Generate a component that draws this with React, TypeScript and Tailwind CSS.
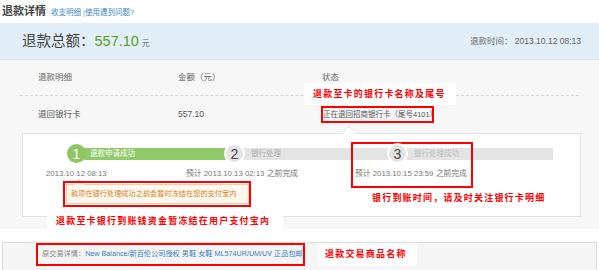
import type { ReactNode } from "react";

function StepCircle({ n, done }: { n: number; done?: boolean }) {
  return (
    <div
      className={
        done
          ? "relative z-10 w-[19px] h-[19px] rounded-full bg-[#8dc663] text-white flex items-center justify-center text-[14px] leading-none"
          : "relative z-10 w-[21px] h-[21px] rounded-full bg-[#e4e4e4] border-2 border-white text-[#444] flex items-center justify-center text-[14px] leading-none"
      }
    >
      {n}
    </div>
  );
}

function Mark({ className }: { className: string }) {
  return <div className={"absolute border-2 border-[#f00] " + className} />;
}

function Note({ className, children }: { className: string; children: ReactNode }) {
  return (
    <div
      className={
        "absolute text-[9px] font-bold text-[#f00] tracking-[1.2px] whitespace-nowrap " + className
      }
    >
      {children}
    </div>
  );
}

export default function App() {
  return (
    <div className="relative w-[599px] h-[270px] overflow-hidden bg-white text-[#666] font-['Liberation_Sans','Noto_Sans_CJK_SC',sans-serif]">
      {/* header */}
      <div className="flex items-center h-[23px] px-[2px] gap-[5px]">
        <h1 className="text-[11px] font-bold text-[#444] leading-none">退款详情</h1>
        <div className="text-[7.5px] text-[#3d86c6] mt-[2px] whitespace-nowrap">
          收支明细 <span className="text-[#999]">|</span>使用遇到问题?
        </div>
      </div>

      {/* total */}
      <div className="h-[37px] bg-[#e2eff9] border-b border-[#d4e4f0] flex items-center justify-between pl-[22px] pr-[18px]">
        <div className="flex items-baseline leading-none">
          <span className="text-[14.5px] text-[#444]">退款总额：</span>
          <span className="text-[14.5px] text-[#5a9e24]">557.10</span>
          <span className="text-[8px] ml-[3px] text-[#666]">元</span>
        </div>
        <div className="text-[8.5px] text-[#666] mt-[1px]">退款时间： 2013.10.12 08:13</div>
      </div>

      {/* body */}
      <div className="bg-[#f7f7f7] pb-[12px]">
        <div className="grid grid-cols-[140px_144px_1fr] pl-[38px] h-[35px] items-center text-[8.5px] text-[#666]">
          <div>退款明细</div>
          <div>金额（元）</div>
          <div>状态</div>
        </div>
        <div className="mx-[20px] border-t border-dashed border-[#d8d8d8]" />
        <div className="grid grid-cols-[140px_145px_1fr] pl-[38px] h-[37px] items-center text-[8.5px] text-[#555]">
          <div>退回银行卡</div>
          <div>557.10</div>
          <div className="text-[7.5px]">正在退回招商银行卡（尾号4101）</div>
        </div>

        {/* progress panel */}
        <div className="relative ml-[22px] mr-[18px] h-[84px] bg-white border border-[#e2e2e2] pt-[9px]">
          <div className="absolute -top-[8px] left-[318px] w-0 h-0 border-x-[8px] border-x-transparent border-b-[8px] border-b-[#e2e2e2]" />
          <div className="absolute -top-[7px] left-[319px] w-0 h-0 border-x-[7px] border-x-transparent border-b-[7px] border-b-white" />

          <div className="flex items-center ml-[44px] h-[21px]">
            <StepCircle n={1} done />
            <div className="-ml-[2px] w-[142px] h-[12px] bg-[#90c96a] text-white text-[7.5px] leading-[12px] pl-[6px]">
              退款申请成功
            </div>
            <div className="-ml-[2px]">
              <StepCircle n={2} />
            </div>
            <div className="-ml-[2px] w-[146px] h-[12px] bg-[#e4e4e4] text-[#aaa] text-[7.5px] leading-[12px] pl-[8px]">
              银行处理
            </div>
            <div className="-ml-[2px]">
              <StepCircle n={3} />
            </div>
            <div className="-ml-[2px] w-[147px] h-[12px] bg-[#e4e4e4] text-[#bbb] text-[7.5px] leading-[12px] pl-[8px]">
              银行处理成功
            </div>
          </div>

          <div className="flex ml-[23px] mt-[5px] text-[7.8px] leading-[10px] text-[#777] whitespace-nowrap">
            <div className="w-[140px]">2013.10.12 08:13</div>
            <div className="w-[169px]">预计 2013.10.13 02:13 之前完成</div>
            <div>预计 2013.10.15 23:59 之前完成</div>
          </div>

          <div className="relative ml-[43px] mt-[5px] w-[183px] h-[20px] bg-[#fff8ee] border border-[#f1cf9f] text-[#d8811f] text-[7.2px] leading-[18px] pl-[4px] whitespace-nowrap">
            <div className="absolute -top-[6px] left-[6px] w-0 h-0 border-x-[6px] border-x-transparent border-b-[6px] border-b-[#f1cf9f]" />
            <div className="absolute -top-[5px] left-[7px] w-0 h-0 border-x-[5px] border-x-transparent border-b-[5px] border-b-[#fff8ee]" />
            款项在银行处理成功之前会暂时冻结在您的支付宝内
          </div>
        </div>
      </div>

      {/* footer */}
      <div className="mt-[13px] mx-[2px] h-[30px] bg-[#f5f5f5] border-t border-x border-[#dcdcdc] pl-[39px] pt-[6px] text-[7.2px] leading-[10px] whitespace-nowrap">
        <span className="text-[#888]">原交易详情：</span>
        <span className="text-[#3a7fc6]">New Balance/新百伦公司授权 男鞋 女鞋 ML574UR/UM/UV 正品包邮</span>
      </div>

      {/* annotations */}
      <Note className="left-[304px] top-[83px] w-[152px] h-[22px] bg-white pl-[9px] leading-[22px]">
        退款至卡的银行卡名称及尾号
      </Note>
      <Mark className="left-[321px] top-[106px] w-[113px] h-[17px]" />
      <Mark className="left-[351px] top-[142px] w-[122px] h-[46px]" />
      <Mark className="left-[63px] top-[181px] w-[188px] h-[26px]" />
      <Note className="left-[372px] top-[192px] leading-[12px]">银行到账时间，请及时关注银行卡明细</Note>
      <Note className="left-[47px] top-[212px] w-[236px] h-[18px] bg-white pl-[9px] leading-[18px]">
        退款至卡银行到账钱资金暂冻结在用户支付宝内
      </Note>
      <Mark className="left-[36px] top-[243px] w-[269px] h-[23px]" />
      <Note className="left-[318px] top-[243px] w-[99px] h-[23px] bg-white pl-[7px] leading-[23px]">
        退款交易商品名称
      </Note>
    </div>
  );
}
